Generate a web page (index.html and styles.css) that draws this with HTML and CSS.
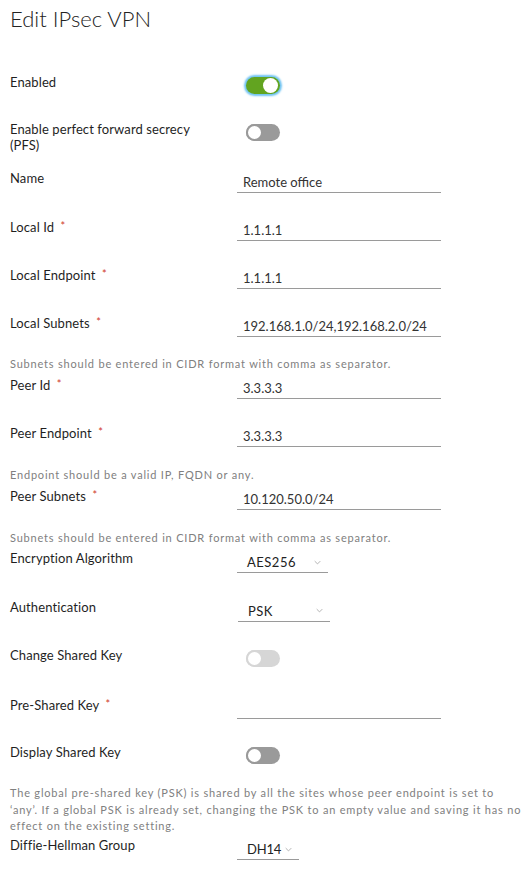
FILE: index.html
```html
<!DOCTYPE html>
<html>
<head>
<meta charset="utf-8">
<link rel="stylesheet" href="styles.css">
</head>
<body>
<div class="page">
  <h1 class="title">Edit IPsec VPN</h1>
  <form class="form">
    <div class="row row-first">
      <div class="main">
        <label class="label">Enabled</label>
        <div class="ctl"><span class="toggle on focus"><span class="knob"></span></span></div>
      </div>
    </div>
    <div class="row row-tall">
      <div class="main">
        <label class="label">Enable perfect forward secrecy (PFS)</label>
        <div class="ctl"><span class="toggle off"><span class="knob"></span></span></div>
      </div>
    </div>
    <div class="row">
      <div class="main">
        <label class="label">Name</label>
        <div class="ctl"><div class="input">Remote office</div></div>
      </div>
    </div>
    <div class="row">
      <div class="main">
        <label class="label">Local Id <span class="req">*</span></label>
        <div class="ctl"><div class="input">1.1.1.1</div></div>
      </div>
    </div>
    <div class="row">
      <div class="main">
        <label class="label">Local Endpoint <span class="req">*</span></label>
        <div class="ctl"><div class="input">1.1.1.1</div></div>
      </div>
    </div>
    <div class="row">
      <div class="main">
        <label class="label">Local Subnets <span class="req">*</span></label>
        <div class="ctl"><div class="input">192.168.1.0/24,192.168.2.0/24</div></div>
      </div>
      <p class="help">Subnets should be entered in CIDR format with comma as separator.</p>
    </div>
    <div class="row">
      <div class="main">
        <label class="label">Peer Id <span class="req">*</span></label>
        <div class="ctl"><div class="input">3.3.3.3</div></div>
      </div>
    </div>
    <div class="row">
      <div class="main">
        <label class="label">Peer Endpoint <span class="req">*</span></label>
        <div class="ctl"><div class="input">3.3.3.3</div></div>
      </div>
      <p class="help help-b">Endpoint should be a valid IP, FQDN or any.</p>
    </div>
    <div class="row">
      <div class="main">
        <label class="label">Peer Subnets <span class="req">*</span></label>
        <div class="ctl"><div class="input">10.120.50.0/24</div></div>
      </div>
      <p class="help help-c">Subnets should be entered in CIDR format with comma as separator.</p>
    </div>
    <div class="row row-lower">
      <div class="main">
        <label class="label">Encryption Algorithm</label>
        <div class="ctl"><div class="select sel-aes"><span>AES256</span><svg class="chev" viewBox="0 0 10 6"><path d="M1 1 L5 5 L9 1" /></svg></div></div>
      </div>
    </div>
    <div class="row row-lower">
      <div class="main">
        <label class="label">Authentication</label>
        <div class="ctl"><div class="select sel-psk"><span>PSK</span><svg class="chev" viewBox="0 0 10 6"><path d="M1 1 L5 5 L9 1" /></svg></div></div>
      </div>
    </div>
    <div class="row row-lower">
      <div class="main">
        <label class="label">Change Shared Key</label>
        <div class="ctl"><span class="toggle disabled"><span class="knob"></span></span></div>
      </div>
    </div>
    <div class="row row-lower">
      <div class="main">
        <label class="label">Pre-Shared Key <span class="req">*</span></label>
        <div class="ctl"><div class="input"></div></div>
      </div>
    </div>
    <div class="row row-lower">
      <div class="main">
        <label class="label">Display Shared Key</label>
        <div class="ctl"><span class="toggle off"><span class="knob"></span></span></div>
      </div>
      <p class="help help-long">The global pre-shared key (PSK) is shared by all the sites whose peer endpoint is set to<br>‘any’. If a global PSK is already set, changing the PSK to an empty value and saving it has no<br>effect on the existing setting.</p>
    </div>
    <div class="row row-lower">
      <div class="main">
        <label class="label">Diffie-Hellman Group</label>
        <div class="ctl"><div class="select sel-dh"><span>DH14</span><svg class="chev" viewBox="0 0 10 6"><path d="M1 1 L5 5 L9 1" /></svg></div></div>
      </div>
    </div>
  </form>
</div>
</body>
</html>
```

FILE: styles.css
```css
html, body {
  margin: 0;
  padding: 0;
  background: #ffffff;
}

body {
  font-family: Lato, "Liberation Sans", sans-serif;
  color: #1f1f1f;
  overflow: hidden;
}

.page {
  padding: 0 0 0 10px;
  width: 515px;
}

.title {
  margin: 0;
  padding-top: 5px;
  font-size: 22px;
  font-weight: 300;
  line-height: 28px;
  color: #222;
}

.form {
  display: flex;
  flex-direction: column;
  margin-top: 39px;
}

.row {
  display: flex;
  flex-direction: column;
  margin-bottom: 6px;
}

.row-lower {
  margin-bottom: 6.5px;
}

.main {
  display: flex;
  height: 42px;
}

.row-first .main {
  height: 41px;
}

.row-tall .main {
  height: 43px;
}

.label {
  width: 227px;
  flex: none;
  font-size: 13px;
  line-height: 16px;
  padding-top: 2px;
  color: #1f1f1f;
  letter-spacing: 0.1px;
  padding-right: 30px;
  box-sizing: border-box;
}

.req {
  color: #d0382a;
  font-size: 11px;
  margin-left: 3px;
  vertical-align: 2px;
}

.ctl {
  flex: 1;
}

.input {
  width: 204px;
  height: 25px;
  box-sizing: border-box;
  border-bottom: 1px solid #9a9a9a;
  font-size: 13px;
  line-height: 16px;
  padding: 6px 0 0 6px;
  color: #333;
}

.select {
  height: 25px;
  box-sizing: border-box;
  border-bottom: 1px solid #9a9a9a;
  display: flex;
  align-items: center;
  justify-content: space-between;
  padding: 4px 7px 0 10px;
  font-size: 13px;
  color: #222;
  letter-spacing: 0.5px;
}

.sel-aes { width: 91px; }
.sel-psk { width: 92px; margin-left: 1px; }
.sel-dh { width: 62px; letter-spacing: -0.2px; }

.chev {
  width: 7px;
  height: 5px;
  fill: none;
  stroke: #a6a6a6;
  stroke-width: 1.2;
}

.toggle {
  display: block;
  position: relative;
  width: 34px;
  height: 17px;
  border-radius: 9px;
  margin: 5px 0 0 9px;
  box-sizing: border-box;
}

.toggle .knob {
  position: absolute;
  top: 1px;
  width: 15px;
  height: 15px;
  border-radius: 50%;
  background: #fff;
  box-sizing: border-box;
}

.toggle.on {
  background: #62a420;
}

.toggle.on .knob {
  right: 2px;
  top: 1px;
}

.toggle.focus {
  box-shadow: 0 0 2px 2px #6fc3f2;
}

.toggle.off {
  background: #9a9a9a;
}

.toggle.off .knob {
  left: 0;
  top: 0;
  width: 17px;
  height: 17px;
  border: 2px solid #9a9a9a;
}

.toggle.disabled {
  background: #d6d6d6;
}

.toggle.disabled .knob {
  left: 0;
  top: 0;
  width: 17px;
  height: 17px;
  border: 2px solid #d6d6d6;
}

.help {
  margin: 2px 0 -4px 0;
  font-size: 11px;
  line-height: 16px;
  color: #808080;
  letter-spacing: 0.8px;
  white-space: nowrap;
}

.help-b {
  margin-top: 3px;
  margin-bottom: -4px;
}

.help-c {
  margin-top: 3px;
  margin-bottom: -4px;
}

.help-long {
  line-height: 16.5px;
  margin-top: 1px;
  margin-bottom: -6px;
  letter-spacing: 0.8px;
}
```
